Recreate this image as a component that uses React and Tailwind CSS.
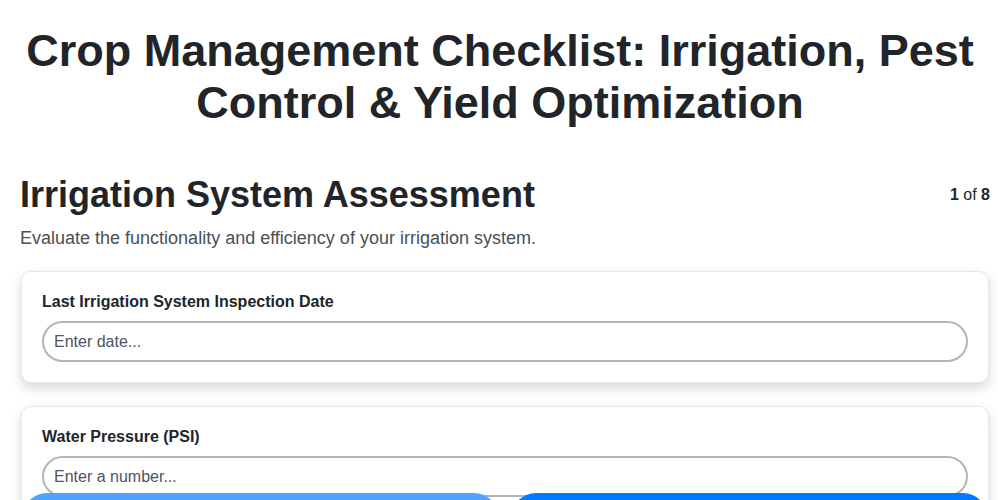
export default function App() {
  return (
    <div className="min-h-screen bg-white font-['Liberation_Sans',Arial,sans-serif] text-[#212529]">
      <h1 className="pt-[25px] px-5 text-center text-[45px] leading-[52px] font-bold">
        Crop Management Checklist: Irrigation, Pest Control &amp; Yield Optimization
      </h1>

      <div className="pl-5 pr-[10px] pt-[44px] pb-24">
        <div className="flex items-center justify-between">
          <h2 className="text-[36px] leading-[43px] font-bold">Irrigation System Assessment</h2>
          <span className="text-base">
            <b>1</b> of <b>8</b>
          </span>
        </div>
        <p className="mt-[9px] text-lg leading-[27px] text-[#495057]">
          Evaluate the functionality and efficiency of your irrigation system.
        </p>

        <div className="mt-[19px] flex flex-col gap-[23px]">
          <div className="mx-px rounded-[10px] border border-[#e5e7eb] bg-white p-5 shadow-[0_5px_12px_rgba(0,0,0,0.16)]">
            <label className="block text-base font-bold leading-[20px] mb-[9px]">
              Last Irrigation System Inspection Date
            </label>
            <input
              type="text"
              placeholder="Enter date..."
              className="w-full h-[41px] rounded-full border-2 border-[#adb5bd] px-[10px] text-base outline-none placeholder:text-[#4b5563]"
            />
          </div>
          <div className="mx-px rounded-[10px] border border-[#e5e7eb] bg-white p-5 shadow-[0_5px_12px_rgba(0,0,0,0.16)]">
            <label className="block text-base font-bold leading-[20px] mb-[9px]">
              Water Pressure (PSI)
            </label>
            <input
              type="text"
              placeholder="Enter a number..."
              className="w-full h-[41px] rounded-full border-2 border-[#adb5bd] px-[10px] text-base outline-none placeholder:text-[#4b5563]"
            />
          </div>
        </div>
      </div>

      {/* nav buttons sit in a bar pinned below the fold */}
      <div className="fixed inset-x-0 top-[493px] flex gap-3 pl-[22px] pr-[12px]">
        <button aria-label="Previous" className="flex-1 h-[50px] rounded-full bg-[#4da3ff]" />
        <button aria-label="Next" className="flex-1 h-[50px] rounded-full bg-[#007bff]" />
      </div>
    </div>
  );
}
